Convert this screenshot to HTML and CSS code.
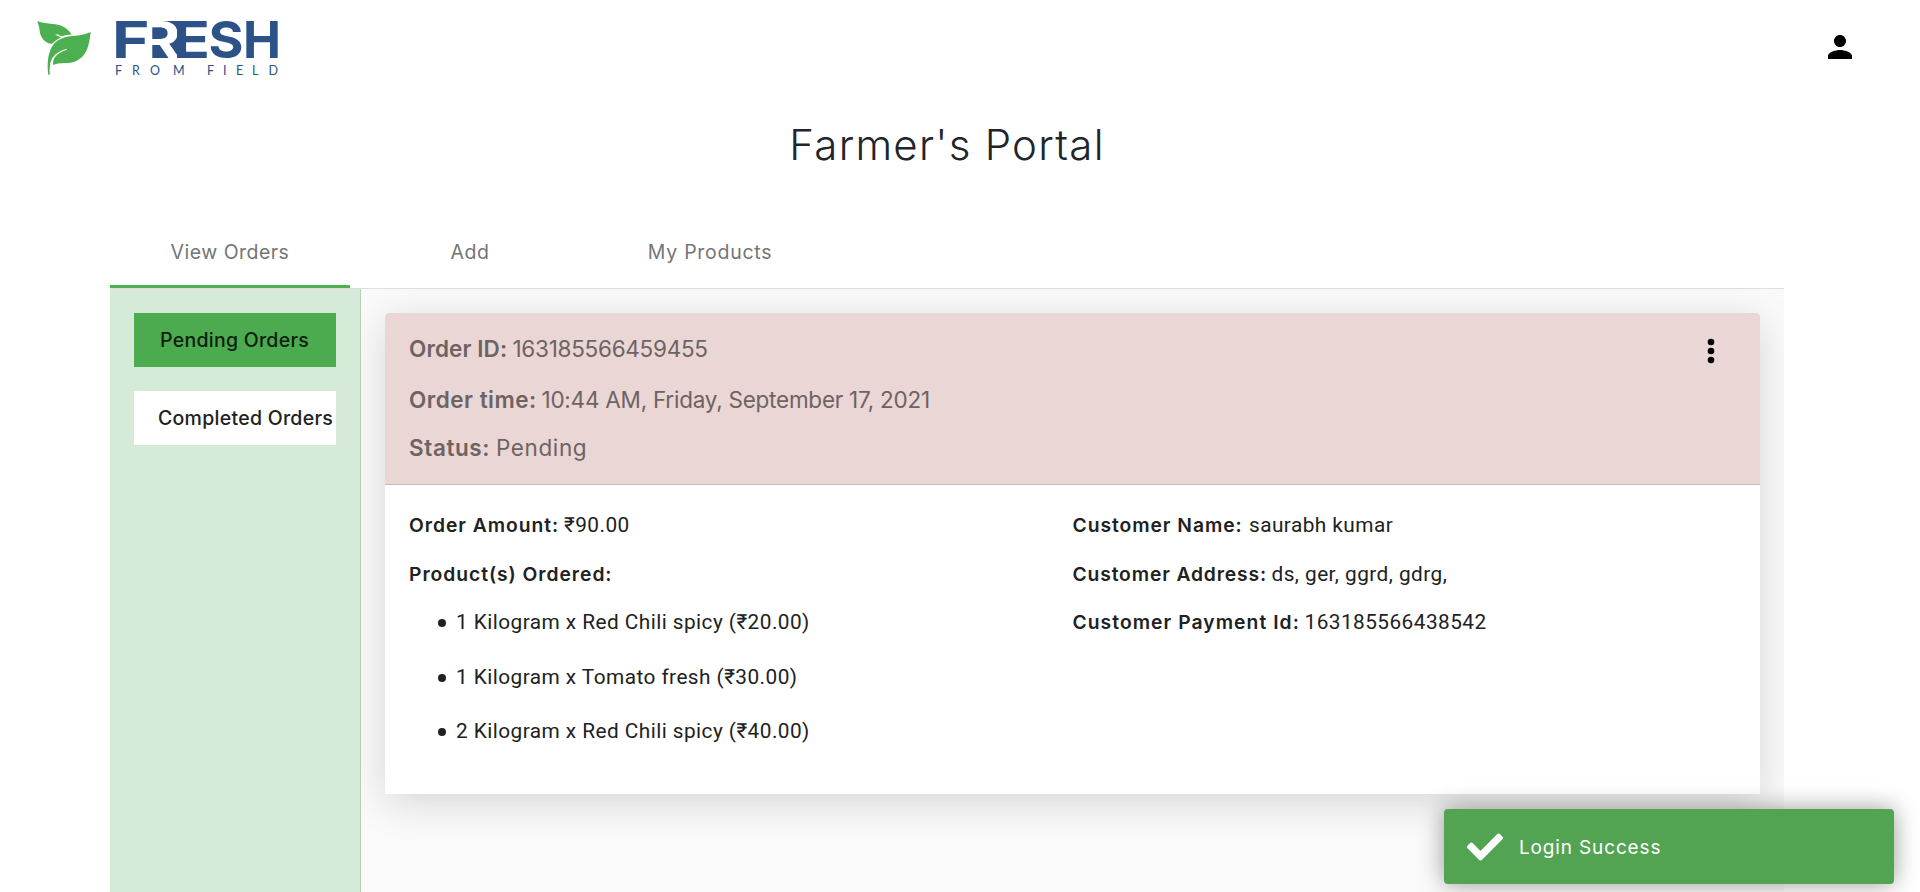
FILE: index.html
```
<!DOCTYPE html>
<html lang="en">
<head>
<meta charset="utf-8">
<title>Farmer's Portal</title>
<link rel="stylesheet" href="styles.css">
</head>
<body>
<header class="navbar">
  <svg class="logo" width="250" height="66" viewBox="34 14 250 66" role="img" aria-label="Fresh From Field">
    <g fill="#4caf50">
      <path d="M37.3 21C46 25 60 22 67.5 29.5Q70 32 71.7 34.4Q66 34.5 61.500 36.200L57.500 34.200L55 34.800L61 37.300Q56 40 51.500 44Q43 42.500 40.200 34Q39.500 27 37.300 21Z"/>
      <path d="M90.700 32C89 46 87 57 74 62Q69 63.500 65 62.900Q57 63 53.200 64.900Q51.500 55 66.800 49.800L66.500 48.800Q52 53 50.300 63Q49.200 69 49.700 74.700H48.300C47.300 66 47 56 52 46.500Q57 38 70 36.200Q82 36 90.700 32Z"/>
    </g>
    <rect class="logo-blue" x="152" y="21" width="32" height="37"/>
    <text class="logo-word logo-cut" x="138.500" y="58" textLength="42" lengthAdjust="spacingAndGlyphs">R</text>
    <g class="logo-blue">
      <text class="logo-word" x="112" y="58" textLength="37.500" lengthAdjust="spacingAndGlyphs">F</text>
      <text class="logo-word" x="173" y="58" textLength="37" lengthAdjust="spacingAndGlyphs">E</text>
      <text class="logo-word" x="208.500" y="58" textLength="35" lengthAdjust="spacingAndGlyphs">S</text>
      <text class="logo-word" x="243" y="58" textLength="38" lengthAdjust="spacingAndGlyphs">H</text>
      <text class="logo-sub" y="75" x="115 132 150 173 207 223 236 252 268.500">FROMFIELD</text>
    </g>
  </svg>
  <svg class="user" width="36" height="36" viewBox="0 0 24 24"><path d="M12 12c2.210 0 4-1.790 4-4s-1.790-4-4-4-4 1.790-4 4 1.790 4 4 4zm0 2c-2.670 0-8 1.340-8 4v2h16v-2c0-2.660-5.330-4-8-4z"/></svg>
</header>
<h1 class="title">Farmer's Portal</h1>
<main class="portal">
  <nav class="tabs">
    <a class="tab tab-active">View Orders</a>
    <a class="tab tab-add">Add</a>
    <a class="tab tab-products">My Products</a>
  </nav>
  <div class="content">
    <aside class="sidebar">
      <div class="side-btn side-active">Pending Orders</div>
      <div class="side-btn">Completed Orders</div>
    </aside>
    <section class="orders">
      <article class="card">
        <div class="card-head">
          <div>
            <div class="head-row"><b class="l-id">Order ID:</b><span class="v-id">163185566459455</span></div>
            <div class="head-row"><b class="l-time">Order time:</b><span class="v-time">10:44 AM, Friday, September 17, 2021</span></div>
            <div class="head-row head-last"><b class="l-status">Status:</b><span class="v-status">Pending</span></div>
          </div>
          <svg class="more" width="36" height="36" viewBox="0 0 24 24"><circle cx="12" cy="6" r="2.200"/><circle cx="12" cy="12" r="2.200"/><circle cx="12" cy="18" r="2.200"/></svg>
        </div>
        <div class="card-body">
          <div class="col col-order">
            <div class="row"><b class="l-amount">Order Amount:</b><span>₹90.00</span></div>
            <div class="row"><b class="l-products">Product(s) Ordered:</b></div>
            <ul class="products">
              <li>1 Kilogram x Red Chili spicy (₹20.00)</li>
              <li>1 Kilogram x Tomato fresh (₹30.00)</li>
              <li>2 Kilogram x Red Chili spicy (₹40.00)</li>
            </ul>
          </div>
          <div class="col">
            <div class="row"><b class="l-name">Customer Name:</b><span>saurabh kumar</span></div>
            <div class="row"><b class="l-address">Customer Address:</b><span>ds, ger, ggrd, gdrg,</span></div>
            <div class="row"><b class="l-payment">Customer Payment Id:</b><span>163185566438542</span></div>
          </div>
        </div>
      </article>
    </section>
  </div>
</main>
<div class="toast">
  <svg width="36" height="36" viewBox="0 0 512 512"><path fill="#fff" d="M173.900 439.400l-166.400-166.400c-10-10-10-26.200 0-36.200l36.200-36.200c10-10 26.200-10 36.200 0L192 312.700 432.100 72.600c10-10 26.200-10 36.200 0l36.200 36.200c10 10 10 26.200 0 36.200l-294.400 294.400c-10 10-26.200 10-36.200 0z"/></svg>
  <span class="toast-text">Login Success</span>
</div>
</body>
</html>
```
FILE: styles.css
```
* { box-sizing: border-box; }
html, body { height: 100%; overflow: hidden; }
body { margin: 0; background: #fff; color: #212121; font-family: Inter, sans-serif; display: flex; flex-direction: column; }
.navbar { height: 94px; flex: none; padding: 14px 62px 0 34px; display: flex; justify-content: space-between; }
.user { margin-top: 15px; }
.logo { overflow: visible; }
.logo-blue { fill: #2d5288; }
.logo-word { font: 700 50.900px Inter, sans-serif; }
.logo-cut { fill: #fff; }
.logo-sub { font: 400 12.500px Lato, sans-serif; }
.title { margin: 0; height: 101px; flex: none; width: 1894px; text-align: center; font-size: 42px; line-height: 102px; font-weight: 300; letter-spacing: 1.250px; color: #212529; }
.portal { flex: 1; width: 1674px; margin-left: 110px; display: flex; flex-direction: column; min-height: 0; }
.tabs { flex: none; height: 94px; display: flex; border-bottom: 1px solid #dedede; }
.tab { width: 240px; padding-top: 22px; text-align: center; color: #757575; font-size: 19.500px; line-height: 71px; letter-spacing: .480px; border-bottom: 3px solid transparent; }
.tab-active { border-color: #4caf50; }
.tab-products { letter-spacing: .720px; }
.content { flex: 1; display: flex; min-height: 0; }
.sidebar { width: 251px; padding: 24px; background: #d6ead8; border-right: 1px solid #b5ceb8; }
.side-btn { height: 54px; margin-bottom: 24px; background: #fff; padding-left: 24px; font-size: 19.500px; font-weight: 500; line-height: 55px; letter-spacing: .270px; white-space: nowrap; }
.side-active { background: #4caa4f; color: #0d1e0e; padding-left: 26px; }
.orders { flex: 1; padding: 24px; background: #fafafa; overflow: hidden; }
.card { height: 481px; background: #fff; border-radius: 4px 4px 0 0; box-shadow: 0 8px 40px rgba(0,0,0,.15); }
.card-head { height: 172px; padding: 18px 31px 0 24px; display: flex; justify-content: space-between; background: #ead6d5; border-bottom: 1px solid #c9b8b8; border-radius: 4px 4px 0 0; color: #6d6362; font-size: 22.500px; }
.card-head b, .row b { font-weight: 600; }
.head-row { display: flex; height: 51px; line-height: 36px; }
.head-last { margin-top: -3px; }
.more { margin-top: 2px; fill: #000; }
.l-id { width: 103.500px; letter-spacing: .100px; }
.l-time { width: 132.500px; letter-spacing: .500px; }
.l-status { width: 87px; letter-spacing: .600px; }
.v-id { letter-spacing: -.280px; }
.v-time { letter-spacing: -.240px; }
.v-status { letter-spacing: .600px; }
.card-body { display: flex; padding: 23px 24px 0; font-family: Roboto, sans-serif; font-size: 20.800px; letter-spacing: .450px; }
.col { flex: 1; }
.col-order { flex: 0 0 663.500px; }
.row { display: flex; align-items: baseline; height: 48.500px; line-height: 35px; }
.row b { font-family: Inter, sans-serif; font-size: 19.300px; letter-spacing: .950px; line-height: 35px; white-space: nowrap; }
.row .l-amount { width: 155px; }
.row .l-name { width: 176.500px; }
.row .l-address { width: 199px; letter-spacing: .850px; }
.row .l-payment { width: 232px; letter-spacing: 1.050px; }
.products { margin: 0; padding: 0; list-style: none; }
.products li { height: 54.500px; line-height: 35px; padding-left: 47px; position: relative; }
.products li::before { content: ""; position: absolute; left: 29px; top: 14px; width: 8px; height: 8px; border-radius: 50%; background: #212121; }
.toast { position: absolute; left: 1444px; top: 809px; width: 450px; height: 75px; padding-left: 23px; display: flex; align-items: center; gap: 16px; background: #52a452; border-radius: 4px; box-shadow: 0 0 24px rgba(0,0,0,.4); color: #fff; font-size: 19px; letter-spacing: .850px; }
.toast-text { padding-top: 2px; }
```
